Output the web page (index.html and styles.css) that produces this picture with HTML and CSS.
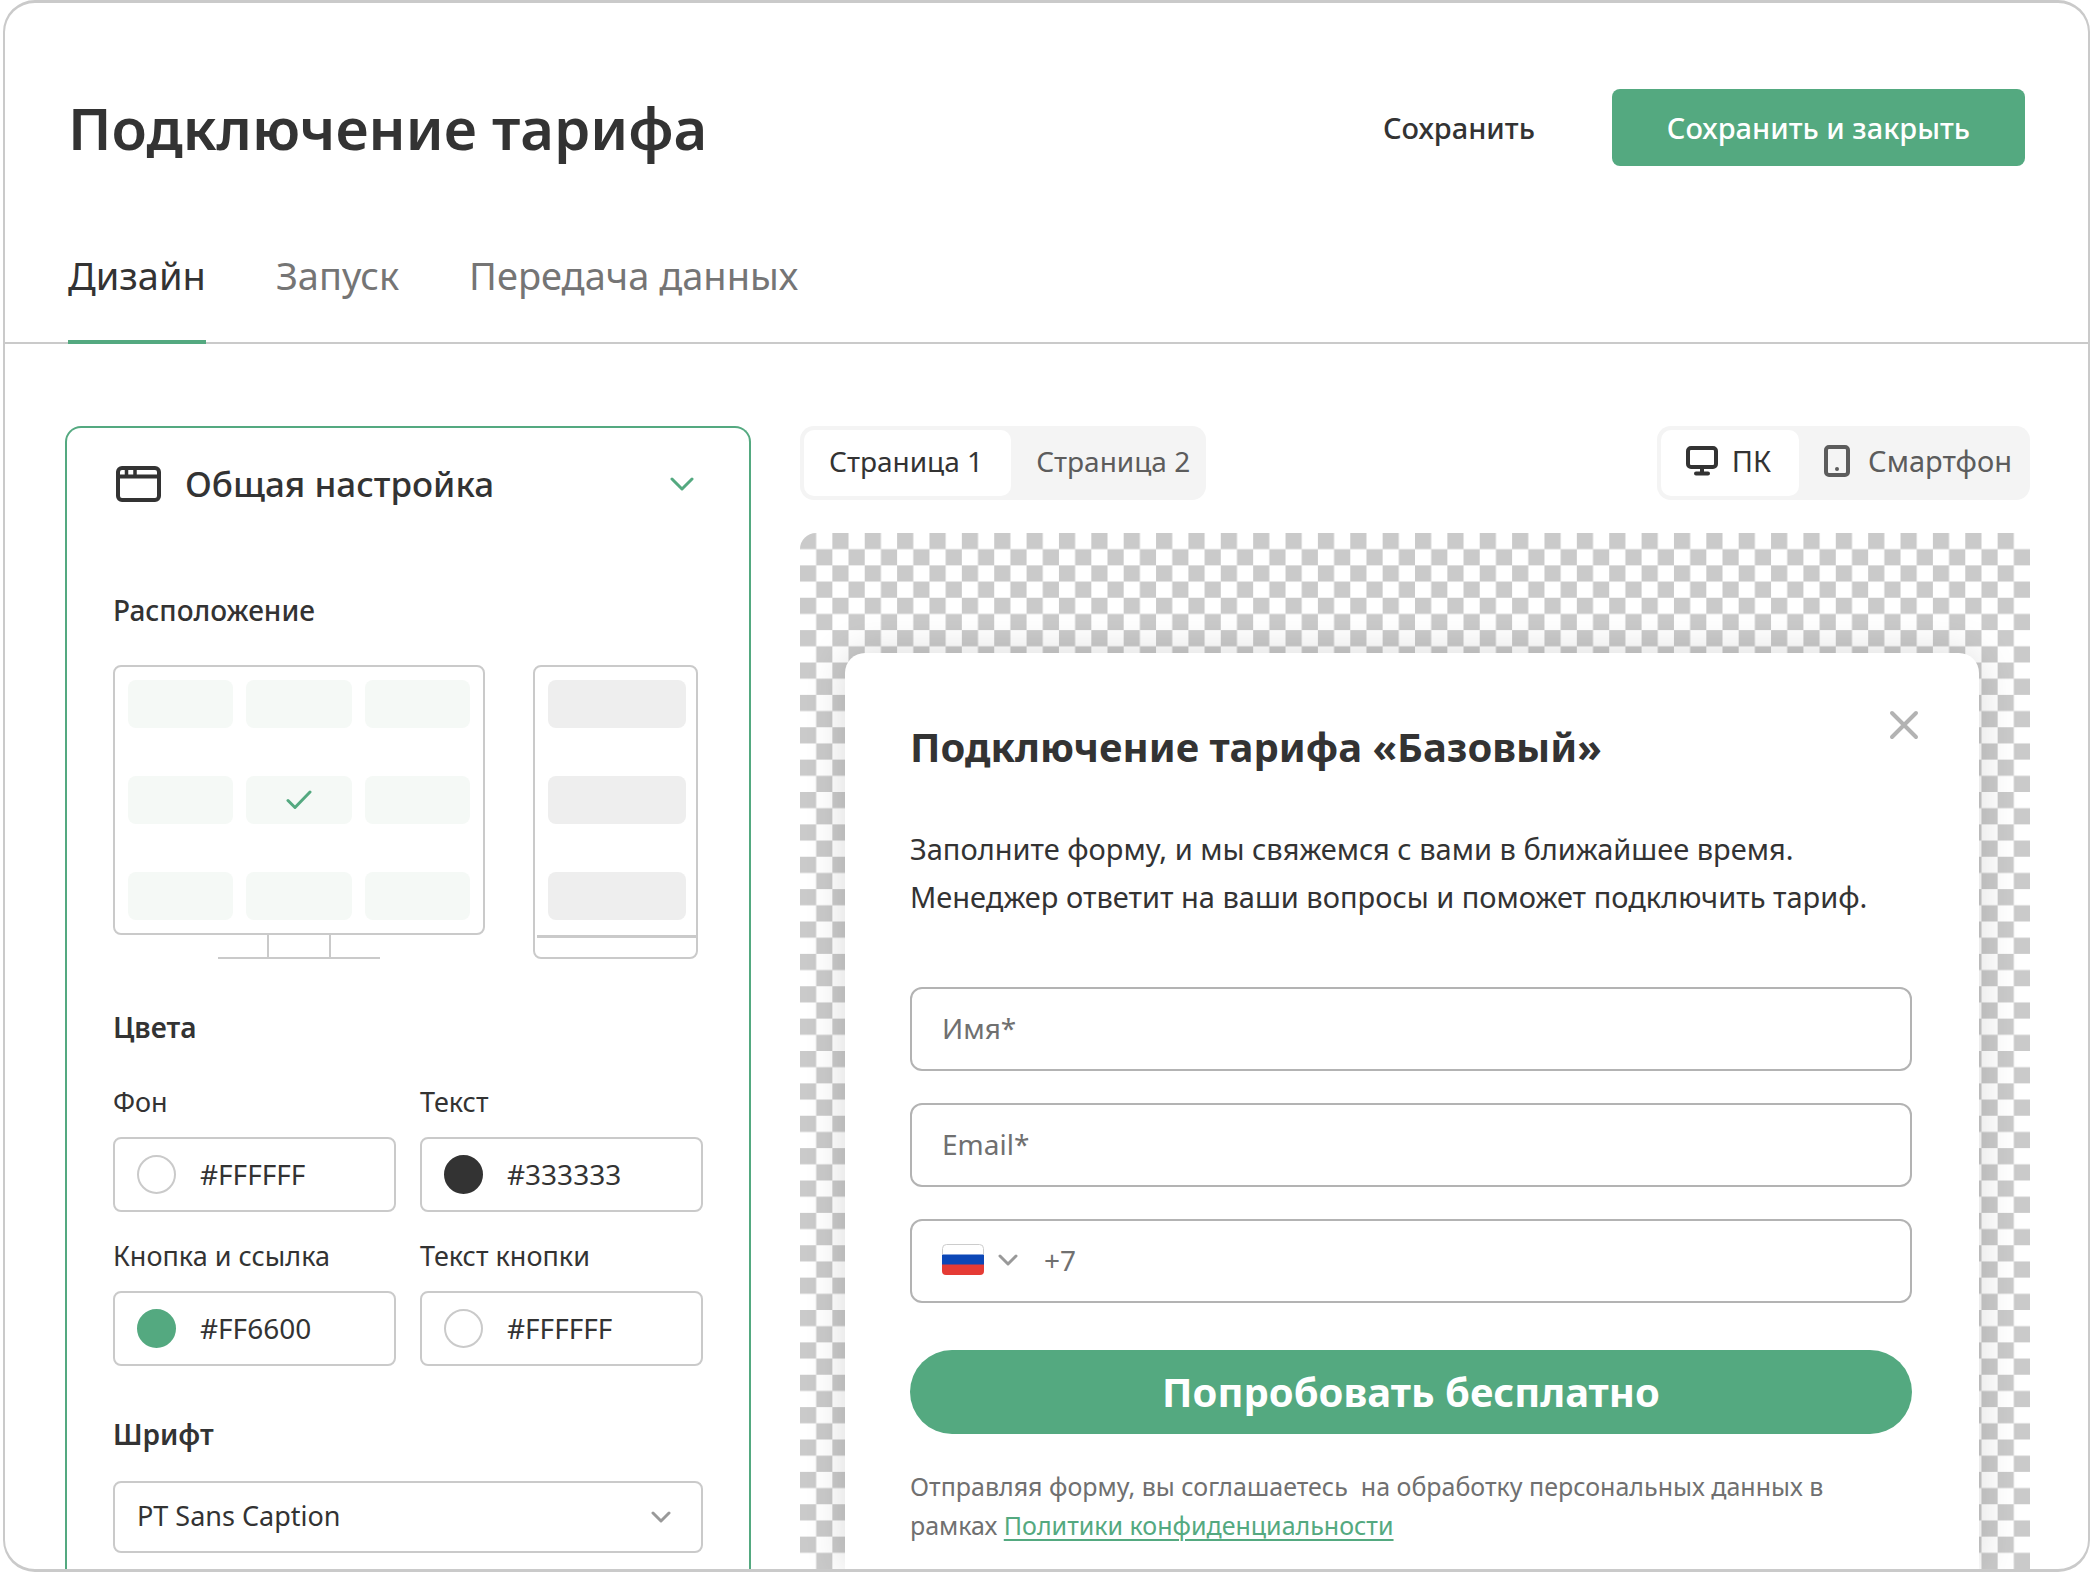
FILE: index.html
```html
<!DOCTYPE html>
<html lang="ru">
<head>
<meta charset="utf-8">
<meta name="viewport" content="width=device-width, initial-scale=1">
<title>Подключение тарифа</title>
<link rel="stylesheet" href="styles.css">
</head>
<body>
<div class="window">
  <header class="topbar">
    <h1 class="topbar-title">Подключение тарифа</h1>
    <div class="topbar-actions">
      <button type="button" class="btn btn-text">Сохранить</button>
      <button type="button" class="btn btn-primary">Сохранить и закрыть</button>
    </div>
  </header>
  <nav class="tabs">
    <a href="#design" class="tab tab-active" aria-current="page">Дизайн</a>
    <a href="#launch" class="tab">Запуск</a>
    <a href="#data" class="tab">Передача данных</a>
  </nav>

  <main class="workspace">
    <section class="settings">
      <button type="button" class="settings-head" aria-expanded="true">
        <svg class="icon-window" viewBox="0 0 48 40" fill="none" stroke="currentColor" stroke-width="4">
          <rect x="5" y="4" width="41" height="32" rx="4"/>
          <path d="M5 12.500h41"/>
          <path d="M13.500 5v8M22 5v8" stroke-width="3.500"/>
        </svg>
        <span class="settings-title">Общая настройка</span>
        <svg class="icon-expand" viewBox="0 0 24 14" fill="none" stroke="currentColor" stroke-width="3" stroke-linecap="round" stroke-linejoin="round"><path d="M2 2l10 10L22 2"/></svg>
      </button>

      <h2 class="group-title group-title-first">Расположение</h2>
      <div class="placement">
        <div class="monitor">
          <div class="monitor-screen">
            <label class="spot"><input type="radio" name="spot" class="sr-only" aria-label="Сверху слева"></label>
            <label class="spot"><input type="radio" name="spot" class="sr-only" aria-label="Сверху"></label>
            <label class="spot"><input type="radio" name="spot" class="sr-only" aria-label="Сверху справа"></label>
            <label class="spot"><input type="radio" name="spot" class="sr-only" aria-label="Слева"></label>
            <label class="spot"><input type="radio" name="spot" class="sr-only" aria-label="По центру" checked>
              <svg class="icon-check" viewBox="0 0 26 20" fill="none" stroke="currentColor" stroke-width="3" stroke-linecap="round" stroke-linejoin="round"><path d="M2 10.500L9 17.500L24 2"/></svg>
            </label>
            <label class="spot"><input type="radio" name="spot" class="sr-only" aria-label="Справа"></label>
            <label class="spot"><input type="radio" name="spot" class="sr-only" aria-label="Снизу слева"></label>
            <label class="spot"><input type="radio" name="spot" class="sr-only" aria-label="Снизу"></label>
            <label class="spot"><input type="radio" name="spot" class="sr-only" aria-label="Снизу справа"></label>
          </div>
          <div class="monitor-neck"></div>
          <div class="monitor-base"></div>
        </div>
        <div class="phone">
          <div class="phone-screen">
            <label class="spot spot-muted"><input type="radio" name="mobile-spot" class="sr-only" aria-label="Сверху"></label>
            <label class="spot spot-muted"><input type="radio" name="mobile-spot" class="sr-only" aria-label="По центру"></label>
            <label class="spot spot-muted"><input type="radio" name="mobile-spot" class="sr-only" aria-label="Снизу"></label>
          </div>
          <div class="phone-foot"></div>
        </div>
      </div>

      <h2 class="group-title group-title-strong">Цвета</h2>
      <div class="colors">
        <div class="color">
          <label class="color-label" for="c-bg">Фон</label>
          <div class="color-box"><span class="swatch"></span><input id="c-bg" class="color-input" value="#FFFFFF"></div>
        </div>
        <div class="color">
          <label class="color-label" for="c-text">Текст</label>
          <div class="color-box"><span class="swatch swatch-dark"></span><input id="c-text" class="color-input" value="#333333"></div>
        </div>
        <div class="color">
          <label class="color-label" for="c-btn">Кнопка и ссылка</label>
          <div class="color-box"><span class="swatch swatch-green"></span><input id="c-btn" class="color-input" value="#FF6600"></div>
        </div>
        <div class="color">
          <label class="color-label" for="c-btn-text">Текст кнопки</label>
          <div class="color-box"><span class="swatch"></span><input id="c-btn-text" class="color-input" value="#FFFFFF"></div>
        </div>
      </div>

      <h2 class="group-title group-title-strong"><label for="font">Шрифт</label></h2>
      <div class="font-box">
        <select id="font" class="font-select"><option>PT Sans Caption</option></select>
        <svg class="icon-down" viewBox="0 0 20 12" fill="none" stroke="currentColor" stroke-width="3" stroke-linecap="round" stroke-linejoin="round"><path d="M2 2l8 8 8-8"/></svg>
      </div>
    </section>

    <section class="preview">
      <div class="toolbar">
        <div class="segments">
          <button type="button" class="segment segment-active">Страница 1</button>
          <button type="button" class="segment segment-page">Страница 2</button>
        </div>
        <div class="segments segments-device">
          <button type="button" class="segment segment-active">
            <svg class="icon-pc" viewBox="0 0 32 30" fill="none" stroke="currentColor" stroke-width="4" stroke-linecap="round"><rect x="2" y="2" width="28" height="19" rx="3"/><path d="M16 22v5M10 27.500h12"/></svg>
            ПК
          </button>
          <button type="button" class="segment segment-device">
            <svg class="icon-phone" viewBox="0 0 26 32" fill="none" stroke="currentColor" stroke-width="4"><rect x="2" y="2" width="22" height="28" rx="3"/><circle cx="13" cy="24" r="2" fill="currentColor" stroke="none"/></svg>
            Смартфон
          </button>
        </div>
      </div>

      <div class="canvas">
        <svg class="checker" viewBox="0 0 76 64" preserveAspectRatio="none" aria-hidden="true">
          <pattern id="checks" width="2" height="2" patternUnits="userSpaceOnUse"><path fill="#cacaca" d="M0 0h1v1H0zM1 1h1v1H1z"/></pattern>
          <rect width="76" height="64" fill="url(#checks)"/>
        </svg>
        <form class="popup">
          <button type="button" class="popup-close" aria-label="Закрыть">
            <svg viewBox="0 0 30 30" fill="none" stroke="currentColor" stroke-width="4" stroke-linecap="round"><path d="M3 3l24 24M27 3L3 27"/></svg>
          </button>
          <h2 class="popup-title">Подключение тарифа «Базовый»</h2>
          <p class="popup-text">Заполните форму, и мы свяжемся с вами в ближайшее время.<br>Менеджер ответит на ваши вопросы и поможет подключить тариф.</p>
          <div class="fields">
            <input class="field" type="text" placeholder="Имя*" aria-label="Имя">
            <input class="field" type="email" placeholder="Email*" aria-label="Email">
            <div class="field field-phone">
              <button type="button" class="country" aria-label="Россия">
                <svg class="flag" viewBox="0 0 42 32">
                  <clipPath id="flag-shape"><rect width="42" height="31" rx="4"/></clipPath>
                  <g clip-path="url(#flag-shape)"><path fill="#fff" d="M0 0h42v11H0z"/><path fill="#0c47b7" d="M0 10.500h42v11H0z"/><path fill="#e53b35" d="M0 20.500h42V32H0z"/></g>
                  <path d="M.5 10.500V4.500a4 4 0 0 1 4-4h33a4 4 0 0 1 4 4v6" fill="none" stroke="#ccc"/>
                </svg>
                <svg class="icon-down" viewBox="0 0 20 12" fill="none" stroke="currentColor" stroke-width="3" stroke-linecap="round" stroke-linejoin="round"><path d="M2 2l8 8 8-8"/></svg>
              </button>
              <input class="phone-input" type="tel" placeholder="+7" aria-label="Телефон">
            </div>
          </div>
          <button type="button" class="popup-submit">Попробовать бесплатно</button>
          <p class="popup-note">Отправляя форму, вы соглашаетесь&nbsp; на обработку персональных данных в рамках <a href="#privacy" class="popup-link">Политики конфиденциальности</a></p>
        </form>
      </div>
    </section>
  </main>
</div>
</body>
</html>
```
FILE: styles.css
```css
:root {
  --ink: #333;
  --muted: #707070;
  --line: #cacaca;
  --field-line: #b3b3b3;
  --green: #54a980;
}

* { box-sizing: border-box; }

body {
  margin: 0;
  background: #fff;
  color: var(--ink);
  font: 400 28px/36px "Noto Sans", "Open Sans", sans-serif;
}

h1, h2, p { margin: 0; }

button, input, select {
  margin: 0;
  padding: 0;
  border: 0;
  background: none;
  color: inherit;
  font: inherit;
}

input, select { outline: 0; min-width: 0; }
button { cursor: pointer; }
svg { display: block; flex: none; }

.sr-only {
  position: absolute;
  width: 1px;
  height: 1px;
  opacity: 0;
}

.window {
  display: flex;
  flex-direction: column;
  min-height: 100vh;
  margin-left: 3px;
  border: solid var(--line);
  border-width: 3px 2px;
  border-radius: 32px;
  overflow: hidden;
}

/* Header */
.topbar {
  display: flex;
  align-items: center;
  justify-content: space-between;
  padding: 86px 63px 0;
}

.topbar-title {
  font-size: 58px;
  font-weight: 600;
  line-height: 76px;
}

.topbar-actions {
  display: flex;
  align-items: center;
  gap: 22px;
}

.btn {
  height: 77px;
  padding: 0 55px;
  border-radius: 8px;
  font-size: 29px;
  font-weight: 500;
}

.btn-primary {
  background: var(--green);
  color: #fff;
}

/* Tabs */
.tabs {
  display: flex;
  gap: 70px;
  padding: 85px 63px 0;
  border-bottom: 2px solid var(--line);
}

.tab {
  margin-bottom: -2px;
  padding-bottom: 41px;
  border-bottom: 4px solid transparent;
  color: #757575;
  font-size: 38px;
  line-height: 48px;
  text-decoration: none;
}

.tab-active {
  border-color: var(--green);
  color: var(--ink);
}

/* Two columns */
.workspace {
  flex: 1;
  display: grid;
  grid-template-columns: minmax(0, 686px) minmax(0, 1fr);
  gap: 49px;
  padding: 82px 58px 0 60px;
}

/* Settings panel */
.settings {
  padding: 32px 46px 16px;
  border: 2px solid var(--green);
  border-bottom: 0;
  border-radius: 16px 16px 0 0;
}

.settings-head {
  display: flex;
  align-items: center;
  gap: 24px;
  width: 100%;
  padding-right: 9px;
  text-align: left;
}

.settings-title {
  flex: 1;
  font-size: 35px;
  font-weight: 500;
  line-height: 48px;
}

.icon-window { width: 48px; height: 40px; }
.icon-expand { width: 24px; height: 14px; color: var(--green); }
.icon-check { width: 26px; height: 20px; color: var(--green); }
.icon-down { width: 20px; height: 12px; color: #999; }

.group-title {
  margin-top: 48px;
  font-size: 28px;
  font-weight: 500;
  line-height: 40px;
}

.group-title-first { margin-top: 82px; }
.group-title-strong { font-weight: 600; }

.placement {
  display: flex;
  gap: 48px;
  margin-top: 35px;
}

.monitor {
  flex: 0 1 372px;
  display: flex;
  flex-direction: column;
  align-items: center;
}

.monitor-screen {
  display: grid;
  grid-template-columns: repeat(3, 1fr);
  gap: 48px 13px;
  width: 100%;
  padding: 13px;
  border: 2px solid var(--line);
  border-radius: 8px;
}

.spot {
  display: flex;
  align-items: center;
  justify-content: center;
  height: 48px;
  border-radius: 8px;
  background: #f5f9f6;
}

.spot-muted { background: #eee; }

.monitor-neck {
  width: 64px;
  height: 22px;
  border: solid var(--line);
  border-width: 0 2px;
}

.monitor-base {
  width: 162px;
  height: 2px;
  background: var(--line);
}

.phone {
  flex: 0 1 165px;
  border: 2px solid var(--line);
  border-radius: 8px;
}

.phone-screen {
  display: grid;
  gap: 48px;
  padding: 13px 10px 15px 13px;
}

.phone-foot {
  margin-left: 2px;
  border-top: 3px solid var(--line);
}

.colors {
  display: grid;
  grid-template-columns: repeat(2, minmax(0, 1fr));
  gap: 26px 24px;
  margin-top: 37px;
}

.color {
  display: grid;
  grid-template-columns: minmax(0, 1fr);
  gap: 17px;
}

.color-label { font-size: 27px; }

.color-box {
  display: flex;
  align-items: center;
  gap: 24px;
  height: 75px;
  padding: 0 22px;
  border: 2px solid var(--line);
  border-radius: 8px;
}

.color-input {
  flex: 1;
  padding-bottom: 2px;
}

.swatch {
  flex: none;
  width: 39px;
  height: 39px;
  border: 2px solid var(--line);
  border-radius: 50%;
}

.swatch-dark { border-color: var(--ink); background: var(--ink); }
.swatch-green { border-color: var(--green); background: var(--green); }

.font-box {
  display: grid;
  align-items: center;
  margin-top: 27px;
}

.font-box > * { grid-area: 1 / 1; }

.font-box .icon-down {
  justify-self: end;
  margin-right: 32px;
  pointer-events: none;
}

.font-select {
  appearance: none;
  height: 72px;
  padding: 0 64px 2px 22px;
  border: 2px solid var(--line);
  border-radius: 8px;
  font-size: 27px;
}

/* Preview */
.preview {
  display: flex;
  flex-direction: column;
}

.toolbar {
  display: flex;
  justify-content: space-between;
}

.segments {
  display: flex;
  padding: 4px;
  border-radius: 14px;
  background: #f4f4f4;
}

.segments-device { font-size: 29px; }

.segment {
  display: flex;
  align-items: center;
  gap: 14px;
  height: 66px;
  padding: 0 28px 4px 25px;
  border-radius: 10px;
  color: #5c5c5c;
}

.segment-active {
  background: #fff;
  color: var(--ink);
}

.segment-page { padding-right: 12px; }
.segment-device { gap: 18px; padding: 0 14px 4px 25px; }

.icon-pc { width: 32px; height: 30px; }
.icon-phone { width: 26px; height: 32px; }

.canvas {
  position: relative;
  flex: 1;
  display: flex;
  margin-top: 33px;
  padding: 120px 51px 0 45px;
  border-radius: 16px 16px 0 0;
  overflow: hidden;
}

/* Transparency grid behind the popup */
.checker {
  position: absolute;
  inset: 0;
  width: 100%;
  height: 100%;
}

.popup {
  position: relative;
  flex: 1;
  padding: 66px 67px 16px 65px;
  border-radius: 20px 20px 0 0;
  background: #fff;
  box-shadow: 0 0 40px rgba(0, 0, 0, .15);
}

.popup-close {
  position: absolute;
  top: 57px;
  right: 60px;
  width: 30px;
  height: 30px;
  color: var(--field-line);
}

.popup-title {
  font-size: 40px;
  font-weight: 700;
  line-height: 56px;
}

.popup-text {
  margin-top: 50px;
  font-size: 29px;
  line-height: 48px;
}

.fields {
  display: grid;
  gap: 32px;
  margin-top: 66px;
}

.field {
  height: 84px;
  padding: 0 30px 2px;
  border: 2px solid var(--field-line);
  border-radius: 12px;
}

.field::placeholder, .phone-input::placeholder {
  color: var(--muted);
  opacity: 1;
}

.field-phone {
  display: flex;
  align-items: center;
  gap: 26px;
}

.country {
  display: flex;
  align-items: center;
  gap: 14px;
}

.flag { width: 42px; height: 32px; }
.phone-input { flex: 1; }

.popup-submit {
  width: 100%;
  height: 84px;
  margin-top: 47px;
  border-radius: 42px;
  background: var(--green);
  color: #fff;
  font-size: 40px;
  font-weight: 700;
}

.popup-note {
  margin-top: 33px;
  color: var(--muted);
  font-size: 25px;
  line-height: 39px;
}

.popup-link {
  color: var(--green);
  text-underline-offset: 4px;
  text-decoration-thickness: 2px;
}
```
